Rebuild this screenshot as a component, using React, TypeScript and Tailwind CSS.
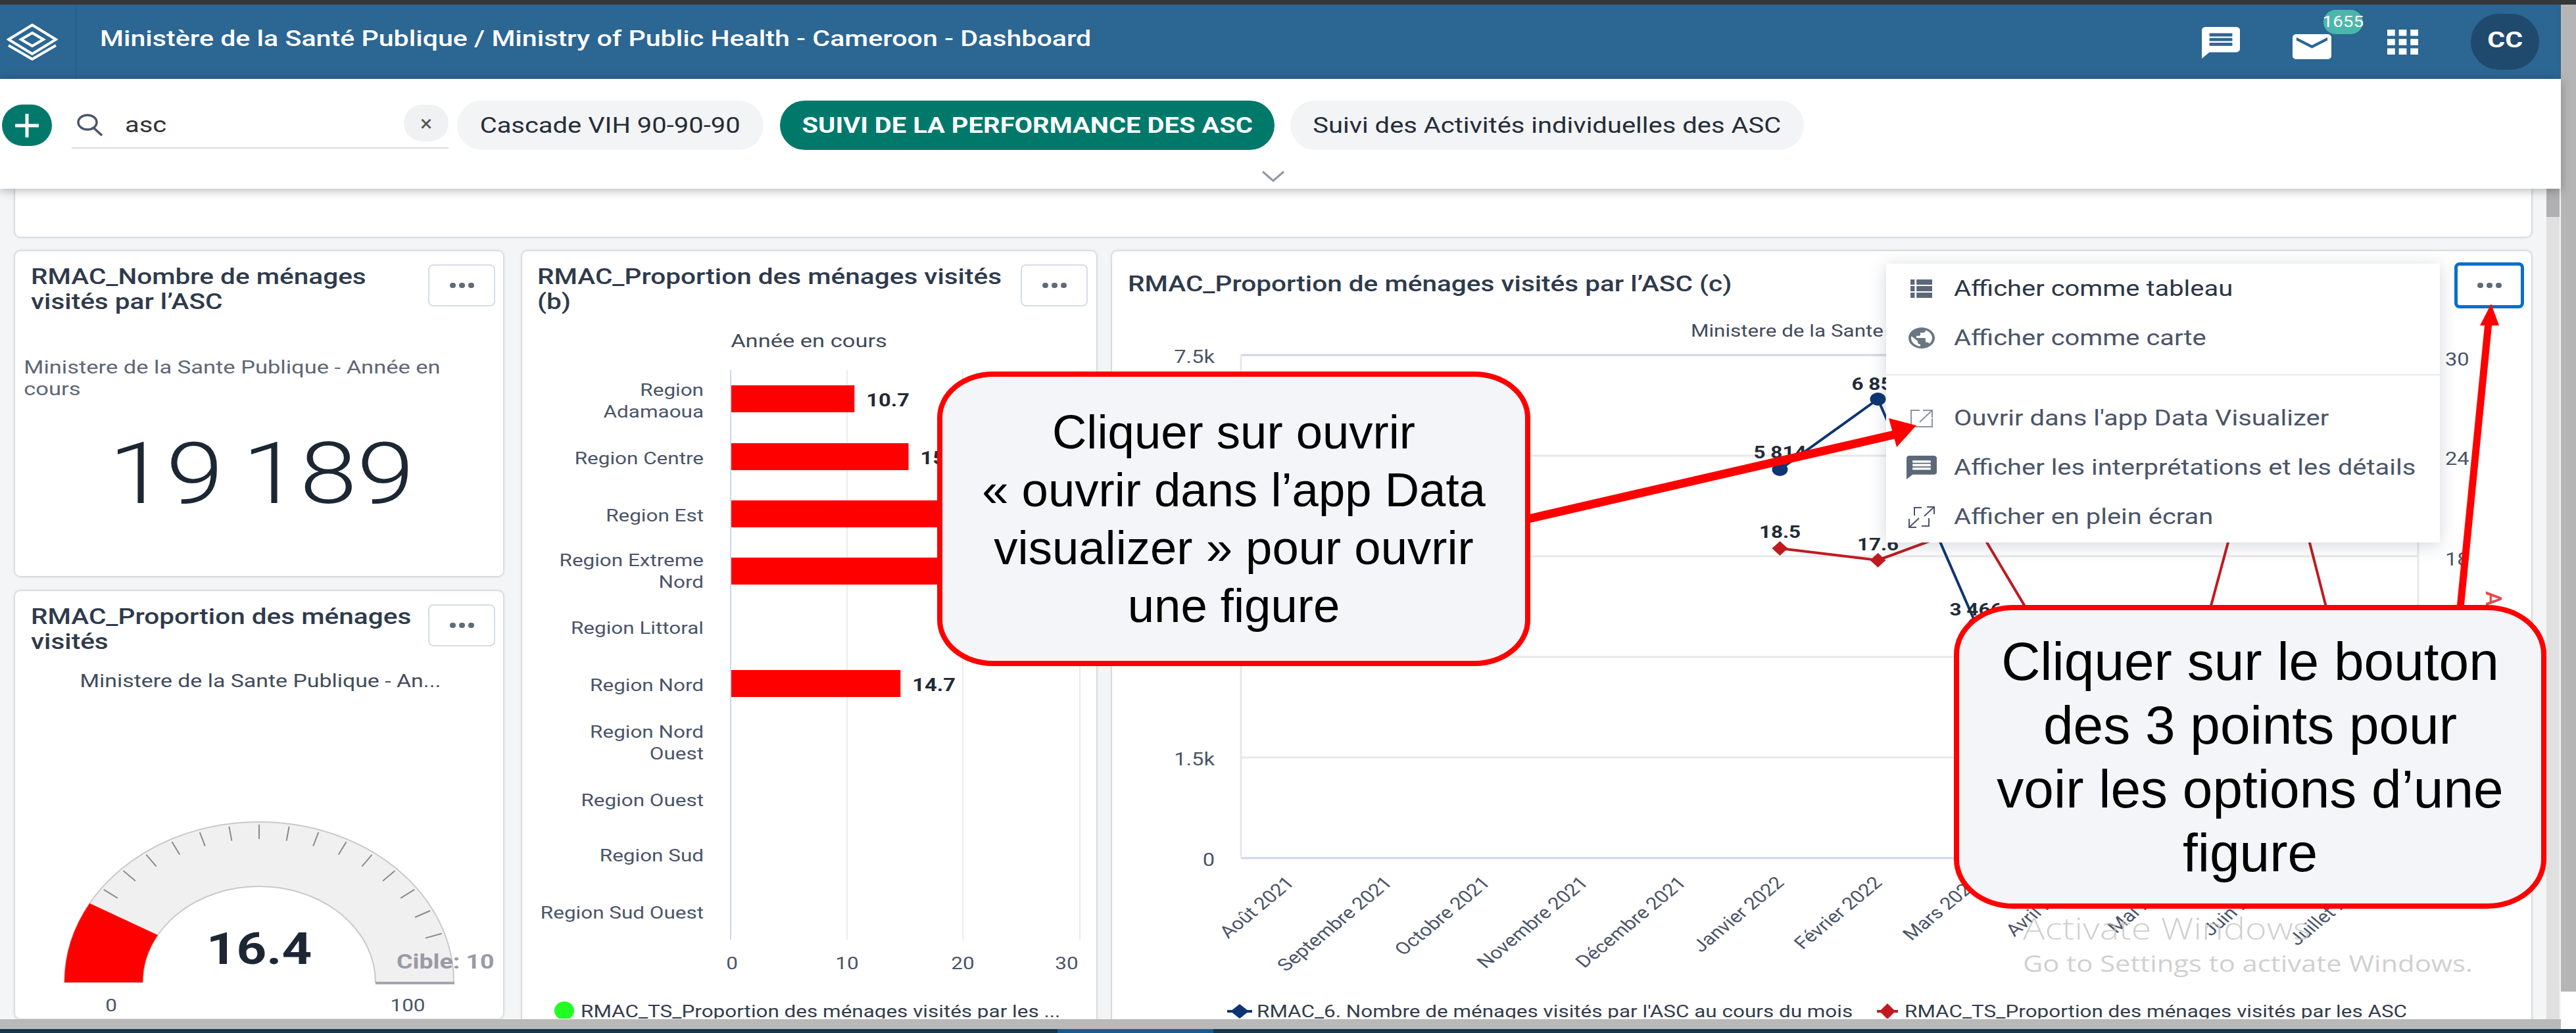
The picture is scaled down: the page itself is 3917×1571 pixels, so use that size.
const REGIONS = [
  { lines: ["Region", "Adamaoua"], y: 593, bar: 10.7, barY: 587, label: "10.7" },
  { lines: ["Region Centre"], y: 697, bar: 15.4, barY: 675, label: "15.4" },
  { lines: ["Region Est"], y: 784, bar: 27, barY: 762 },
  { lines: ["Region Extreme", "Nord"], y: 852, bar: 28, barY: 849 },
  { lines: ["Region Littoral"], y: 955 },
  { lines: ["Region Nord"], y: 1042, bar: 14.7, barY: 1020, label: "14.7" },
  { lines: ["Region Nord", "Ouest"], y: 1113 },
  { lines: ["Region Ouest"], y: 1217 },
  { lines: ["Region Sud"], y: 1301 },
  { lines: ["Region Sud Ouest"], y: 1388 },
];

const MONTHS = [
  "Août 2021",
  "Septembre 2021",
  "Octobre 2021",
  "Novembre 2021",
  "Décembre 2021",
  "Janvier 2022",
  "Février 2022",
  "Mars 2022",
  "Avril 2022",
  "Mai 2022",
  "Juin 2022",
  "Juillet 2022",
];

const monthX = (i: number) => 1887 + 149 * (i + 0.5);

const NAVY_POINTS = [
  { x: monthX(5), y: 715, label: "5 814", labelY: 688 },
  { x: monthX(6), y: 608, label: "6 850", labelY: 584 },
  { x: monthX(7), y: 950, label: "3 466", labelY: 927 },
];

const RED_POINTS = [
  { x: monthX(5), y: 835, label: "18.5", labelY: 809 },
  { x: monthX(6), y: 853, label: "17.6", labelY: 828 },
  { x: monthX(7), y: 798 },
  { x: monthX(8), y: 1048 },
  { x: monthX(9), y: 1143 },
  { x: monthX(10), y: 590 },
  { x: monthX(11), y: 1172 },
];

// The screenshot is stretched sideways, so text gets the same 1.21 widening
function Wide({ center = false, children }: { center?: boolean; children: React.ReactNode }) {
  return (
    <span
      className={
        center
          ? "inline-block origin-center scale-x-[1.21] whitespace-nowrap"
          : "inline-block origin-left scale-x-[1.21] whitespace-nowrap"
      }
    >
      {children}
    </span>
  );
}

function T({
  x,
  y,
  size = 26,
  weight = 400,
  fill = "#4a5568",
  anchor = "start",
  rotate = 0,
  children,
}: {
  x: number;
  y: number;
  size?: number;
  weight?: number;
  fill?: string;
  anchor?: "start" | "middle" | "end";
  rotate?: number;
  children: React.ReactNode;
}) {
  return (
    <text
      transform={`translate(${x} ${y}) scale(1.21 1) rotate(${rotate})`}
      textAnchor={anchor}
      fontSize={size}
      fontWeight={weight}
      fill={fill}
    >
      {children}
    </text>
  );
}

function DotsButton({ focused = false }: { focused?: boolean }) {
  return (
    <button
      className={
        focused
          ? "flex h-[70px] w-[106px] shrink-0 items-center justify-center gap-[5px] rounded-[8px] border-[5px] border-[#0b6ecf] bg-white"
          : "flex h-[64px] w-[102px] shrink-0 items-center justify-center gap-[5px] rounded-[8px] border-2 border-[#d5dde5] bg-white"
      }
    >
      <span className="h-[8px] w-[9px] rounded-full bg-[#5f6b78]" />
      <span className="h-[8px] w-[9px] rounded-full bg-[#5f6b78]" />
      <span className="h-[8px] w-[9px] rounded-full bg-[#5f6b78]" />
    </button>
  );
}

function CardTitle({ children }: { children: React.ReactNode }) {
  return (
    <h2 className="origin-left scale-x-[1.21] text-[33.5px] leading-[38px] font-medium whitespace-nowrap text-[#2f3a4c]">
      {children}
    </h2>
  );
}

function Gauge() {
  const cx = 394;
  const cy = 1495;
  const pt = (rx: number, ry: number, deg: number) => {
    const a = (deg * Math.PI) / 180;
    return `${cx - rx * Math.cos(a)} ${cy - ry * Math.sin(a)}`;
  };
  const band = (from: number, to: number) =>
    `M${pt(296, 244, from)} A296 244 0 0 1 ${pt(296, 244, to)} L${pt(177, 146, to)} A177 146 0 0 0 ${pt(177, 146, from)} Z`;
  const ticks = Array.from({ length: 17 }, (_, i) => (i + 2) * 9);

  return (
    <svg viewBox="23 1000 742 550" className="block h-[550px] w-[742px]">
      <path d={band(0, 180)} fill="#f0f0f0" stroke="#c9c9c9" strokeWidth="2" />
      {ticks.map((deg) => {
        const a = (deg * Math.PI) / 180;
        return (
          <line
            key={deg}
            x1={cx - 292 * Math.cos(a)}
            y1={cy - 240 * Math.sin(a)}
            x2={cx - 266 * Math.cos(a)}
            y2={cy - 218 * Math.sin(a)}
            stroke="#8a8a8a"
            strokeWidth="2"
          />
        );
      })}
      <path d={band(0, 29.5)} fill="#ff0000" />
      <line x1="571" y1="1496" x2="691" y2="1496" stroke="#a5a5b2" strokeWidth="4" />
      <T x={396} y={1046} size={28} anchor="middle" fill="#414c5c">
        Ministere de la Sante Publique - An...
      </T>
      <T x={394} y={1467} size={66} weight={700} anchor="middle" fill="#1c2733">
        16.4
      </T>
      <svg x="600" y="1430" width="152" height="60" viewBox="600 1430 152 60">
        <T x={603} y={1474} size={31} weight={700} fill="#9a9aa6">
          Cible: 100
        </T>
      </svg>
      <T x={169} y={1539} anchor="middle">
        0
      </T>
      <T x={620} y={1539} anchor="middle">
        100
      </T>
    </svg>
  );
}

function BarChart() {
  return (
    <svg viewBox="794 500 873 1050" className="block h-[1050px] w-[873px]">
      <T x={1230} y={529} size={28.5} anchor="middle" fill="#414c5c">
        Année en cours
      </T>
      {[1288, 1464, 1642].map((x) => (
        <line key={x} x1={x} y1="564" x2={x} y2="1430" stroke="#ebebeb" strokeWidth="2" />
      ))}
      <line x1="1111" y1="564" x2="1111" y2="1430" stroke="#ccd6eb" strokeWidth="2" />
      {REGIONS.map((r) => (
        <g key={r.y}>
          {r.lines.map((line, i) => (
            <T key={line} x={1070} y={r.y + 10 + i * 33} anchor="end">
              {line}
            </T>
          ))}
          {r.bar ? <rect x="1112" y={r.barY} width={r.bar * 17.5} height="41" fill="#ff0000" /> : null}
          {r.label ? (
            <T x={1112 + r.bar * 17.5 + 18} y={r.barY + 32} size={27} weight={700} fill="#222b36">
              {r.label}
            </T>
          ) : null}
        </g>
      ))}
      {[
        { x: 1113, t: "0" },
        { x: 1288, t: "10" },
        { x: 1464, t: "20" },
        { x: 1622, t: "30" },
      ].map((tick) => (
        <T key={tick.t} x={tick.x} y={1475} anchor="middle">
          {tick.t}
        </T>
      ))}
      <ellipse cx="858" cy="1538" rx="15" ry="14" fill="#22ff22" />
      <T x={883} y={1548} fill="#333d4c">
        RMAC_TS_Proportion des ménages visités par les ...
      </T>
    </svg>
  );
}

function LineChart() {
  const polyline = (pts: { x: number; y: number }[]) => pts.map((p) => `${p.x},${p.y}`).join(" ");

  return (
    <svg viewBox="1691 480 2158 1070" className="block h-[1070px] w-[2158px]">
      <T x={2571} y={513} fill="#414c5c">
        Ministere de la Sante Publique - Année en cours
      </T>

      {[694, 847, 1000, 1153].map((y) => (
        <line key={y} x1="1887" y1={y} x2="3677" y2={y} stroke="#e8e8e8" strokeWidth="3" />
      ))}
      <line x1="1887" y1="541" x2="3677" y2="541" stroke="#ccd6eb" strokeWidth="3" />
      <line x1="1887" y1="1306" x2="3677" y2="1306" stroke="#ccd6eb" strokeWidth="3" />
      <line x1="1887" y1="541" x2="1887" y2="1306" stroke="#e6e8ec" strokeWidth="3" />
      <line x1="3677" y1="541" x2="3677" y2="1306" stroke="#e6e8ec" strokeWidth="3" />

      {[
        { y: 541, t: "7.5k" },
        { y: 1153, t: "1.5k" },
        { y: 1306, t: "0" },
      ].map((tick) => (
        <T key={tick.t} x={1847} y={tick.y + 12} anchor="end" size={27}>
          {tick.t}
        </T>
      ))}
      {[
        { y: 546, t: "30" },
        { y: 697, t: "24" },
        { y: 850, t: "18" },
      ].map((tick) => (
        <T key={tick.t} x={3718} y={tick.y + 11} size={27}>
          {tick.t}
        </T>
      ))}
      <text x="3780" y="900" fontSize="34" fill="#e8474c" fontWeight="500" transform="rotate(90 3780 900)">
        ASC
      </text>

      <polyline points={polyline(RED_POINTS)} fill="none" stroke="#c01a20" strokeWidth="4" />
      {RED_POINTS.map((p) => (
        <path key={p.x} d={`M${p.x} ${p.y - 11} L${p.x + 12} ${p.y} L${p.x} ${p.y + 11} L${p.x - 12} ${p.y} Z`} fill="#c01a20" />
      ))}
      <polyline points={polyline(NAVY_POINTS)} fill="none" stroke="#0d3572" strokeWidth="4" />
      {NAVY_POINTS.map((p) => (
        <ellipse key={p.x} cx={p.x} cy={p.y} rx="12" ry="10" fill="#0d3572" />
      ))}
      {[...NAVY_POINTS, ...RED_POINTS.slice(0, 2)].map((p) => (
        <T key={p.label} x={p.x} y={(p.labelY ?? 0) + 10} anchor="middle" weight={700} fill="#222b36">
          {p.label}
        </T>
      ))}

      {MONTHS.map((m, i) => (
        <T key={m} x={monthX(i) + 8} y={1345} anchor="end" rotate={-45}>
          {m}
        </T>
      ))}

      <path d="M1885 1528 L1899 1539 L1885 1550 L1871 1539 Z" fill="#0d3572" />
      <line x1="1866" y1="1539" x2="1904" y2="1539" stroke="#0d3572" strokeWidth="4" />
      <T x={1911} y={1548} fill="#333d4c">
        RMAC_6. Nombre de ménages visités par l'ASC au cours du mois
      </T>
      <path d="M2870 1527 L2882 1539 L2870 1551 L2858 1539 Z" fill="#c01a20" />
      <line x1="2854" y1="1539" x2="2886" y2="1539" stroke="#c01a20" strokeWidth="4" />
      <T x={2896} y={1548} fill="#333d4c">
        RMAC_TS_Proportion des ménages visités par les ASC
      </T>
    </svg>
  );
}

function MenuItem({
  label,
  dark = false,
  children,
}: {
  label: string;
  dark?: boolean;
  children: React.ReactNode;
}) {
  return (
    <div className="flex h-[75px] items-center">
      <div className="flex w-[103px] shrink-0 justify-center pl-[4px]">{children}</div>
      <span className={dark ? "text-[33px] text-[#2b3646]" : "text-[33px] text-[#4a5568]"}>
        <Wide>{label}</Wide>
      </span>
    </div>
  );
}

function OptionsMenu() {
  return (
    <div className="absolute top-[19px] left-[1177px] w-[842px] bg-white shadow-[0_4px_24px_rgba(60,70,90,0.22)]">
      <div className="h-[170px] border-b-2 border-[#e5e9ef]">
        <MenuItem label="Afficher comme tableau" dark>
          <svg viewBox="3 5 18 14" preserveAspectRatio="none" className="h-[28px] w-[33px] fill-[#5c6877]">
            <path d="M3 5h3.5v4H3zM8 5h13v4H8zM3 10h3.5v4H3zM8 10h13v4H8zM3 15h3.5v4H3zM8 15h13v4H8z" />
          </svg>
        </MenuItem>
        <MenuItem label="Afficher comme carte">
          <svg viewBox="2 2 20 20" preserveAspectRatio="none" className="h-[32px] w-[40px] fill-[#6b7683]">
            <path d="M12 2C6.48 2 2 6.48 2 12s4.48 10 10 10 10-4.48 10-10S17.52 2 12 2zm-1 17.93c-3.95-.49-7-3.85-7-7.93 0-.62.08-1.21.21-1.79L9 15v1c0 1.1.9 2 2 2v1.93zm6.9-2.54c-.26-.81-1-1.39-1.9-1.39h-1v-3c0-.55-.45-1-1-1H8v-2h2c.55 0 1-.45 1-1V7h2c1.1 0 2-.9 2-2v-.41c2.93 1.19 5 4.06 5 7.41 0 2.08-.8 3.97-2.1 5.39z" />
          </svg>
        </MenuItem>
      </div>
      <div className="pt-[27px] pb-[2px]">
        <MenuItem label="Ouvrir dans l'app Data Visualizer">
          <svg viewBox="0 0 34 28" className="h-[28px] w-[34px] fill-none stroke-[#8a94a0] stroke-2">
            <path d="M14 2H1v25h32V14M19 2h14v11M33 2 14 20" />
          </svg>
        </MenuItem>
        <MenuItem label="Afficher les interprétations et les détails">
          <svg viewBox="2 2 20 20" preserveAspectRatio="none" className="h-[36px] w-[46px] fill-[#5c6877]">
            <path d="M20 2H4c-1.1 0-1.99.9-1.99 2L2 22l4-4h14c1.1 0 2-.9 2-2V4c0-1.1-.9-2-2-2zm-2 12H6v-2h12v2zm0-3H6V9h12v2zm0-3H6V6h12v2z" />
          </svg>
        </MenuItem>
        <MenuItem label="Afficher en plein écran">
          <svg viewBox="0 0 40 34" className="h-[34px] w-[40px] fill-none stroke-[#4a5568] stroke-2">
            <path d="M20 3H9v12M28 2h11v11M39 2 24 16M1 20v13h11M1 33l15-14M31 19v12H20" />
          </svg>
        </MenuItem>
      </div>
    </div>
  );
}

function Card({ className, children }: { className: string; children: React.ReactNode }) {
  return (
    <section className={`relative overflow-hidden rounded-[8px] bg-white shadow-[0_0_4px_rgba(0,0,0,0.3)] ${className}`}>
      {children}
    </section>
  );
}

export default function App() {
  return (
    <div className="relative flex h-[1571px] w-[3917px] flex-col overflow-hidden bg-white font-['Roboto',sans-serif]">
      <div className="h-[7px] shrink-0 bg-[#35373a]" />

      <div className="flex min-h-0 flex-1">
        <div className="flex w-[3894px] shrink-0 flex-col">
          <header className="flex h-[113px] shrink-0 items-center bg-[#2c6693] text-white">
            <div className="flex h-full w-[116px] shrink-0 items-center border-r border-[#265a82] pl-[10px]">
              <svg viewBox="0 0 78 56" preserveAspectRatio="none" className="h-[56px] w-[78px] fill-none stroke-white stroke-[4]">
                <path d="M39 2 75 24 39 46 3 24Z" />
                <path d="M39 14 56 24 39 34 22 24Z" />
                <path d="M3 33 39 54 75 33" />
              </svg>
            </div>
            <h1 className="mb-[10px] ml-[36px] text-[34px] font-medium">
              <Wide>Ministère de la Santé Publique / Ministry of Public Health - Cameroon - Dashboard</Wide>
            </h1>
            <div className="ml-auto flex items-center pr-[33px]">
              <svg viewBox="2 2 20 20" preserveAspectRatio="none" className="mt-[2px] h-[48px] w-[58px] fill-white">
                <path d="M20 2H4c-1.1 0-1.99.9-1.99 2L2 22l4-4h14c1.1 0 2-.9 2-2V4c0-1.1-.9-2-2-2zm-2 12H6v-2h12v2zm0-3H6V9h12v2zm0-3H6V6h12v2z" />
              </svg>
              <div className="relative ml-[80px]">
                <svg viewBox="2 4 20 16" preserveAspectRatio="none" className="mt-[14px] block h-[38px] w-[59px] fill-white">
                  <path d="M20 4H4c-1.1 0-1.99.9-1.99 2L2 18c0 1.1.9 2 2 2h16c1.1 0 2-.9 2-2V6c0-1.1-.9-2-2-2zm0 4l-8 5-8-5V6l8 5 8-5v2z" />
                </svg>
                <span className="absolute top-[-23px] left-[47px] flex h-[37px] w-[60px] items-center justify-center rounded-full bg-[#4db6ac] text-[23px] leading-none">
                  <Wide center>1655</Wide>
                </span>
              </div>
              <svg viewBox="4 4 16 16" preserveAspectRatio="none" className="ml-[85px] h-[38px] w-[47px] fill-white">
                <path d="M4 8h4V4H4v4zm6 12h4v-4h-4v4zm-6 0h4v-4H4v4zm0-6h4v-4H4v4zm6 0h4v-4h-4v4zm6-10v4h4V4h-4zm-6 4h4V4h-4v4zm6 6h4v-4h-4v4zm0 6h4v-4h-4v4z" />
              </svg>
              <div className="ml-[80px] flex h-[85px] w-[104px] items-center justify-center rounded-full bg-[#1f4a6e] pb-[6px] text-[34px] font-bold">
                <Wide center>CC</Wide>
              </div>
            </div>
          </header>

          <div className="relative z-10 flex h-[167px] shrink-0 flex-col bg-white shadow-[0_3px_14px_rgba(0,0,0,0.28)]">
            <div className="flex items-center pt-[33px] pl-[3px]">
              <div className="flex h-[63px] w-[76px] shrink-0 items-center justify-center rounded-full bg-[#00796b]">
                <svg viewBox="0 0 40 40" className="h-[40px] w-[40px] stroke-white stroke-[5]">
                  <path d="M20 2v36M2 20h36" />
                </svg>
              </div>
              <div className="ml-[30px] flex h-[70px] w-[573px] shrink-0 items-center border-b-2 border-[#d5dde5] pl-[7px]">
                <svg viewBox="0 0 42 34" className="h-[34px] w-[42px] shrink-0 fill-none stroke-[#4a5568] stroke-[3.5]">
                  <ellipse cx="17" cy="13" rx="14" ry="11" />
                  <path d="M27 22 39 33" />
                </svg>
                <span className="ml-[32px] text-[33px] text-[#333]">
                  <Wide>asc</Wide>
                </span>
                <span className="mb-[6px] ml-auto flex h-[56px] w-[68px] items-center justify-center rounded-full bg-[#f0f1f2] text-[34px] leading-none text-[#555]">
                  ×
                </span>
              </div>
              <div className="ml-[13px] flex h-[75px] w-[466px] shrink-0 items-center justify-center rounded-full bg-[#f3f4f6] text-[33px] text-[#252d38]">
                <Wide center>Cascade VIH 90-90-90</Wide>
              </div>
              <div className="ml-[25px] flex h-[75px] w-[752px] shrink-0 items-center justify-center rounded-full bg-[#00796b] text-[33px] font-bold text-white">
                <Wide center>SUIVI DE LA PERFORMANCE DES ASC</Wide>
              </div>
              <div className="ml-[24px] flex h-[75px] w-[781px] shrink-0 items-center justify-center rounded-full bg-[#f3f4f6] text-[33px] text-[#252d38]">
                <Wide center>Suivi des Activités individuelles des ASC</Wide>
              </div>
            </div>
            <div className="mt-[31px] flex justify-center pr-[22px]">
              <svg viewBox="0 0 36 18" className="h-[18px] w-[36px] fill-none stroke-[#8a99a8] stroke-[3]">
                <path d="M2 2 18 16 34 2" />
              </svg>
            </div>
          </div>

          <main className="flex min-h-0 flex-1 overflow-hidden bg-[#f3f5f7]">
            <div className="flex w-[3872px] shrink-0 flex-col gap-[22px] pl-[23px]">
              <div className="h-[73px] w-[3826px] shrink-0 rounded-b-[8px] bg-white shadow-[0_0_4px_rgba(0,0,0,0.3)]" />
              <div className="flex min-h-0 flex-1 items-start">
                <div className="flex w-[742px] shrink-0 flex-col gap-[23px]">
                  <Card className="h-[494px]">
                    <div className="flex justify-between pt-[20px] pr-[12px] pl-[24px]">
                      <CardTitle>
                        RMAC_Nombre de ménages
                        <br />
                        visités par l’ASC
                      </CardTitle>
                      <DotsButton />
                    </div>
                    <p className="mt-[64px] origin-left scale-x-[1.21] pl-[11px] text-[28.5px] leading-[33px] whitespace-nowrap text-[#5d6776]">
                      Ministere de la Sante Publique - Année en
                      <br />
                      cours
                    </p>
                    <p className="mt-[38px] scale-x-[1.21] pl-[6px] text-center text-[130px] leading-[150px] font-light [word-spacing:-8px] text-[#1c2733]">
                      19 189
                    </p>
                  </Card>
                  <Card className="h-[650px]">
                    <div className="flex justify-between pt-[20px] pr-[12px] pl-[24px]">
                      <CardTitle>
                        RMAC_Proportion des ménages
                        <br />
                        visités
                      </CardTitle>
                      <DotsButton />
                    </div>
                    <div className="mt-[4px]">
                      <Gauge />
                    </div>
                  </Card>
                </div>

                <Card className="ml-[29px] h-[1180px] w-[873px] shrink-0">
                  <div className="flex h-[117px] justify-between pt-[20px] pr-[13px] pl-[23px]">
                    <CardTitle>
                      RMAC_Proportion des ménages visités
                      <br />
                      (b)
                    </CardTitle>
                    <DotsButton />
                  </div>
                  <BarChart />
                </Card>

                <Card className="ml-[24px] h-[1180px] w-[2158px] shrink-0">
                  <div className="flex h-[97px] items-start justify-between pt-[17px] pr-[11px] pl-[24px]">
                    <div className="pt-[14px]">
                      <CardTitle>RMAC_Proportion de ménages visités par l’ASC (c)</CardTitle>
                    </div>
                    <DotsButton focused />
                  </div>
                  <LineChart />
                  <OptionsMenu />
                </Card>
              </div>
            </div>
            <div className="h-full w-[20px] shrink-0 bg-[#e0e0e0]">
              <div className="h-[43px] bg-[#b0b0b0]" />
            </div>
          </main>

          <div className="h-[15px] shrink-0 bg-[#b9b9b9]" />
        </div>
        <div className="flex w-[23px] shrink-0 flex-col bg-white">
          <div className="h-[1501px] bg-[#b5b5b5]" />
        </div>
      </div>

      <div className="flex h-[6px] shrink-0 bg-[#14354b]">
        <div className="ml-[1608px] w-[237px] bg-[#1d5a8a]" />
      </div>

      <svg viewBox="0 0 3917 1571" className="pointer-events-none absolute inset-0 z-20 h-[1571px] w-[3917px]">
        <line x1="2320" y1="790" x2="2880" y2="661" stroke="#ff0000" strokeWidth="13" />
        <path d="M2914 647 2872 636 2884 680Z" fill="#ff0000" />
        <line x1="3741" y1="925" x2="3784" y2="490" stroke="#ff0000" strokeWidth="11" />
        <path d="M3788 462 3771 495 3800 495Z" fill="#ff0000" />
      </svg>

      <div className="absolute top-[565px] left-[1425px] z-30 flex h-[448px] w-[902px] items-center justify-center rounded-[85px/70px] border-[8px] border-[#ff0000] bg-[#f3f5f8] text-center font-['Liberation_Sans',sans-serif] text-[72.5px] leading-[88px] text-black">
        <p>
          Cliquer sur ouvrir
          <br />« ouvrir dans l’app Data
          <br />
          visualizer » pour ouvrir
          <br />
          une figure
        </p>
      </div>
      <div className="absolute top-[920px] left-[2971px] z-30 flex h-[462px] w-[901px] items-center justify-center rounded-[90px/75px] border-[8px] border-[#ff0000] bg-[#f3f5f8] text-center font-['Liberation_Sans',sans-serif] text-[82px] leading-[97px] text-black">
        <p>
          Cliquer sur le bouton
          <br />
          des 3 points pour
          <br />
          voir les options d’une
          <br />
          figure
        </p>
      </div>

      <div className="pointer-events-none absolute top-[1382px] left-[3076px] z-40 origin-left scale-x-[1.21] whitespace-nowrap font-['Open_Sans',sans-serif] text-[#c4c4c4]/80">
        <p className="text-[46px] leading-[58px] font-light">Activate Windows</p>
        <p className="mt-[2px] text-[34.5px] leading-[46px]">Go to Settings to activate Windows.</p>
      </div>
    </div>
  );
}
